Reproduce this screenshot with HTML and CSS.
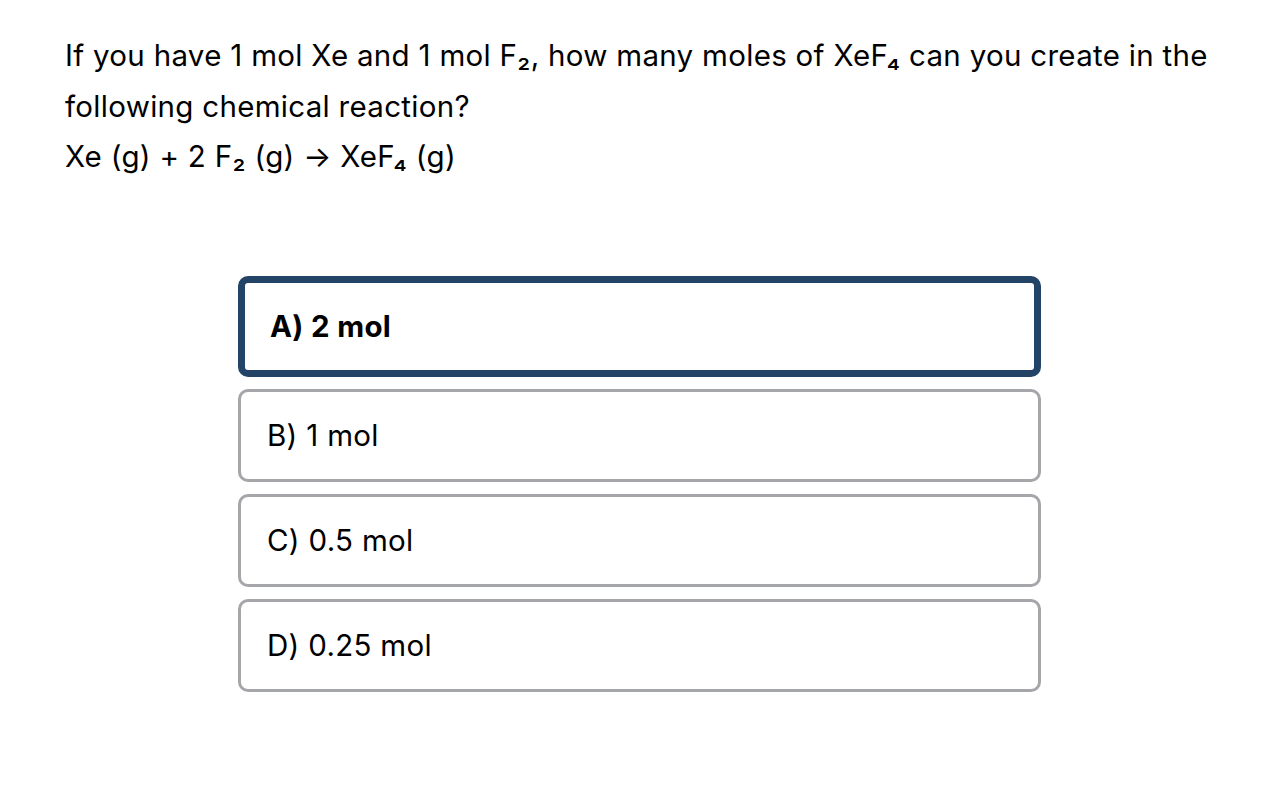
FILE: index.html
```html
<!DOCTYPE html>
<html>
<head>
<meta charset="utf-8">
<link rel="stylesheet" href="styles.css">
</head>
<body>
<div class="page">
  <div class="question">
    <p class="q-line">If you have 1 mol Xe and 1 mol F₂, how many moles of XeF₄ can you create in the following chemical reaction?</p>
    <p class="q-line">Xe (g) + 2 F₂ (g) → XeF₄ (g)</p>
  </div>
  <div class="options">
    <div class="option selected">A) 2 mol</div>
    <div class="option">B) 1 mol</div>
    <div class="option">C) 0.5 mol</div>
    <div class="option">D) 0.25 mol</div>
  </div>
</div>
</body>
</html>
```
FILE: styles.css
```css
html, body {
  margin: 0;
  padding: 0;
  background: #ffffff;
}
body {
  font-family: Inter, "Liberation Sans", sans-serif;
  color: #000000;
}
.page {
  width: 1149px;
  padding: 30px 0 0 65px;
}
.question {
  font-size: 29.5px;
  line-height: 50.5px;
  letter-spacing: 0.3px;
  margin-right: -30px;
}
.q-line {
  margin: 0;
}
.options {
  width: 803px;
  margin: 94px auto 0;
  display: flex;
  flex-direction: column;
  gap: 12px;
}
.option {
  box-sizing: border-box;
  height: 93px;
  border: 3px solid #a5a6aa;
  border-radius: 10px;
  padding: 0 26px;
  display: flex;
  align-items: center;
  font-size: 29.5px;
  letter-spacing: 0.3px;
}
.option.selected {
  height: 101px;
  border: 7px solid #234466;
  font-weight: 700;
  padding-left: 25px;
}
```
